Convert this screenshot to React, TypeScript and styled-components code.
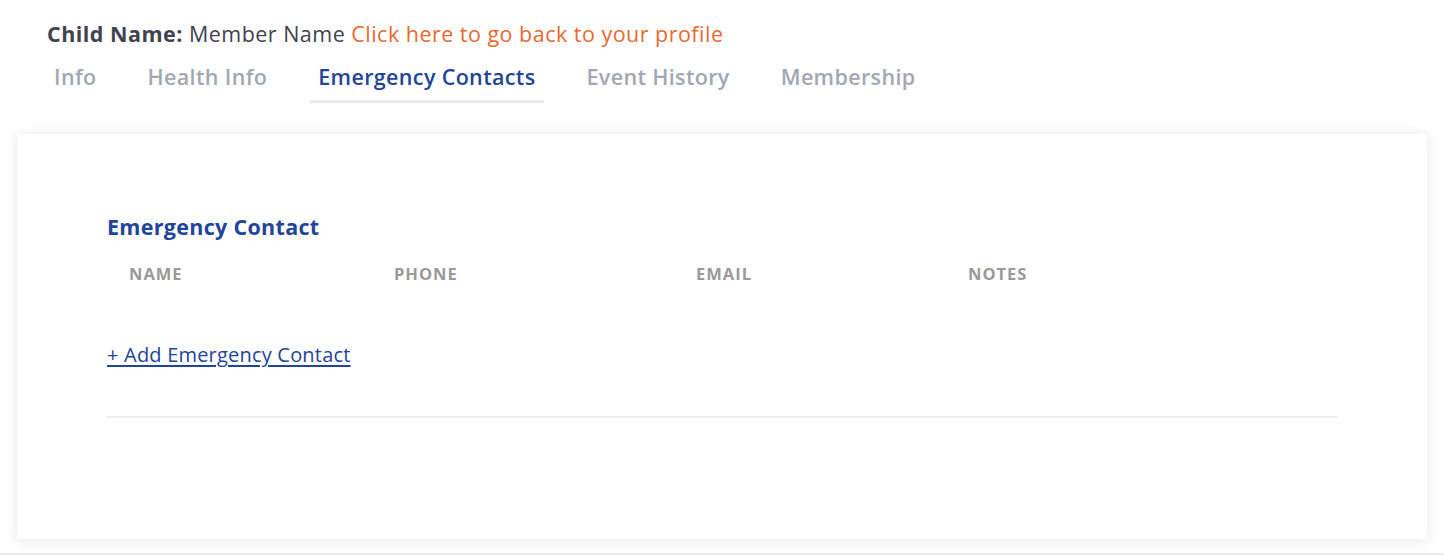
import React from 'react'
import styled, { createGlobalStyle } from 'styled-components'

const GlobalStyle = createGlobalStyle`
  html, body {
    margin: 0;
    padding: 0;
    background: #ffffff;
    font-family: 'Open Sans', 'Liberation Sans', sans-serif;
  }
`

const tabs = ['Info', 'Health Info', 'Emergency Contacts', 'Event History', 'Membership']
const columns = ['Name', 'Phone', 'Email', 'Notes']

const App = () => {
  return (
    <>
      <GlobalStyle />
      <Page>
        <Header>
          <strong>Child Name:</strong> Member Name <BackLink href="#">Click here to go back to your profile</BackLink>
        </Header>
        <TabBar>
          {tabs.map((t) => (
            <Tab key={t} active={t === 'Emergency Contacts'}>
              {t}
            </Tab>
          ))}
        </TabBar>
        <Card>
          <SectionTitle>Emergency Contact</SectionTitle>
          <TableHead>
            {columns.map((c) => (
              <HeadCell key={c}>{c}</HeadCell>
            ))}
          </TableHead>
          <AddLink href="#">+ Add Emergency Contact</AddLink>
          <Divider />
        </Card>
        <Footer />
      </Page>
    </>
  )
}

const Page = styled.div`
  display: flex;
  flex-direction: column;
  min-height: 557px;
  padding-top: 19px;
  box-sizing: border-box;
`

const Header = styled.div`
  padding-left: 47px;
  font-size: 21.5px;
  line-height: 30px;
  color: #3f4350;
  letter-spacing: 0.48px;
  strong {
    font-weight: 700;
  }
`

const BackLink = styled.a`
  color: #e8692f;
  text-decoration: none;
`

const TabBar = styled.div`
  display: flex;
  gap: 35px;
  padding-left: 46px;
  margin-top: 14px;
`

const Tab = styled.div<{ active?: boolean }>`
  padding: 0 8px 9px;
  font-size: 21.5px;
  line-height: 28px;
  font-weight: 600;
  letter-spacing: 0.35px;
  color: ${(p) => (p.active ? '#24449a' : '#a3a7b4')};
  border-bottom: 3px solid ${(p) => (p.active ? '#e9ebf3' : 'transparent')};
`

const Card = styled.div`
  margin: 31px 17px 0;
  height: 405px;
  box-sizing: border-box;
  background: #fff;
  box-shadow: 0 1px 12px rgba(0, 0, 0, 0.1);
  padding: 80px 90px 0;
  display: flex;
  flex-direction: column;
`

const SectionTitle = styled.div`
  font-size: 21.5px;
  line-height: 26px;
  font-weight: 700;
  color: #22449a;
  letter-spacing: 0.3px;
`

const TableHead = styled.div`
  display: grid;
  grid-template-columns: 265px 302px 272px 1fr;
  margin-top: 24px;
`

const HeadCell = styled.div`
  padding-left: 22px;
  font-size: 16.5px;
  line-height: 20px;
  font-weight: 700;
  letter-spacing: 1px;
  text-transform: uppercase;
  color: #9a9a9a;
`

const AddLink = styled.a`
  align-self: flex-start;
  margin-top: 58px;
  font-size: 20px;
  line-height: 26px;
  color: #24449a;
  text-decoration: underline;
  text-underline-offset: 3px;
  letter-spacing: 0.2px;
`

const Divider = styled.div`
  margin-top: 48px;
  height: 2px;
  background: #ececec;
`

const Footer = styled.div`
  margin-top: 14px;
  height: 2px;
  background: #e9e9ee;
`

export default App
